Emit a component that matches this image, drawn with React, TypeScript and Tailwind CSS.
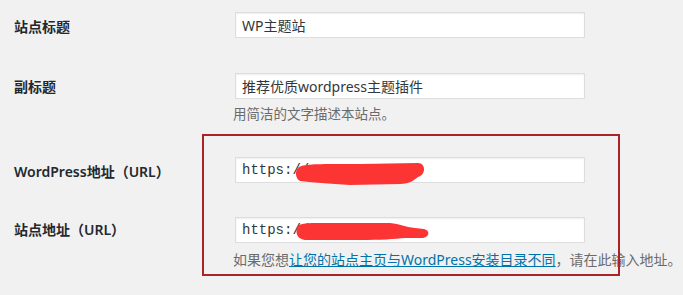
const font = "font-['Noto_Sans','Noto_Sans_CJK_SC',sans-serif]";

function Field({ value, mono }: { value: string; mono?: boolean }) {
  return (
    <div
      className={`flex h-[26px] w-[350px] items-center border border-[#dddddd] bg-white pl-[6px] text-[14px] text-[#32373c] shadow-[inset_0_1px_2px_rgba(0,0,0,0.07)] ${
        mono ? "font-['Liberation_Mono',monospace] text-[13.5px]" : ""
      }`}
    >
      {value}
    </div>
  );
}

function Label({ children, offset }: { children: string; offset: string }) {
  return (
    <div className={`w-[221px] shrink-0 text-[14px] font-semibold leading-[20px] text-[#23282d] ${offset}`}>
      {children}
    </div>
  );
}

export default function App() {
  return (
    <div className={`relative min-h-[295px] w-[683px] overflow-hidden bg-[#f1f1f1] ${font}`}>
      <div className="pl-[14px] pt-[12px]">
        <div className="flex">
          <Label offset="pt-[5px]">站点标题</Label>
          <Field value="WP主题站" />
        </div>

        <div className="mt-[35px] flex">
          <Label offset="pt-[4px]">副标题</Label>
          <div className="-ml-[2px]">
            <div className="ml-[2px]">
              <Field value="推荐优质wordpress主题插件" />
            </div>
            <p className="mt-[6px] text-[13.5px] leading-[18px] text-[#6b6b6b]">用简洁的文字描述本站点。</p>
          </div>
        </div>

        <div className="mt-[34px] flex">
          <Label offset="pt-[5px]">WordPress地址（URL）</Label>
          <Field value="https://" mono />
        </div>

        <div className="mt-[34px] flex">
          <Label offset="pt-[3px]">站点地址（URL）</Label>
          <div className="-ml-[2px]">
            <div className="ml-[2px]">
              <Field value="https://" mono />
            </div>
            <p className="mt-[8px] whitespace-nowrap text-[14px] leading-[18px] text-[#6b6b6b]">
              如果您想
              <a href="#" className="text-[#0073aa] underline">
                让您的站点主页与WordPress安装目录不同
              </a>
              ，请在此输入地址。
            </p>
          </div>
        </div>
      </div>

      {/* annotation: red frame and redaction strokes */}
      <div className="pointer-events-none absolute left-[202px] top-[134px] h-[142px] w-[418px] border-2 border-[#ab2328]" />
      <svg className="pointer-events-none absolute left-0 top-0" width="683" height="295" viewBox="0 0 683 295">
        <path
          d="M298,168 C300,163 330,164 360,164 L418,163 C426,163 426,175 418,177 C414,180 410,184 400,184 L350,185 C330,184 310,182 300,181 C295,178 295,171 298,168 Z"
          fill="#fd3434"
        />
        <path
          d="M298,226 C300,222 320,223 340,223 L390,223 C400,224 405,227 415,228 L424,229 C430,230 430,237 423,238 L405,238 C395,239 380,240 360,240 L305,240 C296,239 295,231 298,226 Z"
          fill="#fd3434"
        />
      </svg>
    </div>
  );
}
